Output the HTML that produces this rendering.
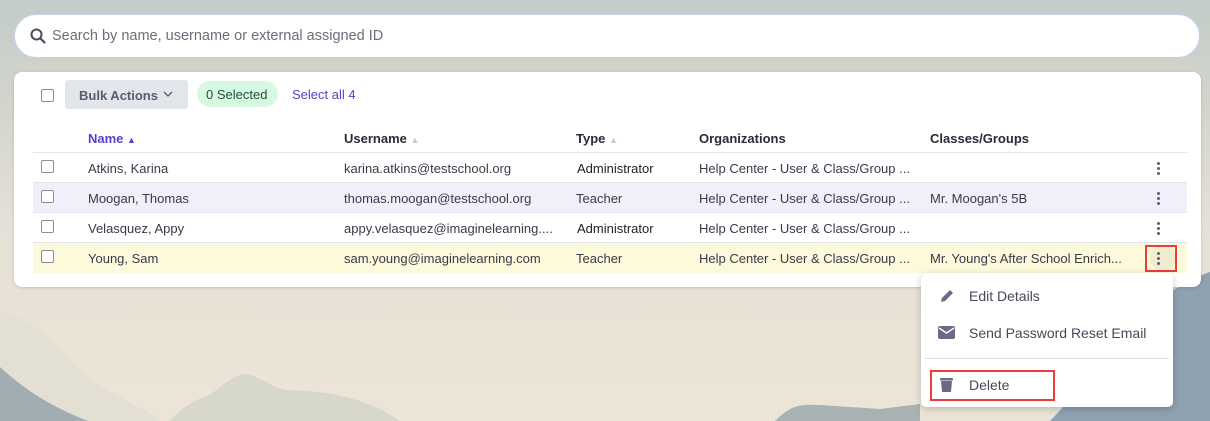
<!DOCTYPE html>
<html><head><style>
*{box-sizing:border-box;margin:0;padding:0}
body{width:1210px;height:421px;overflow:hidden;position:relative;font-family:"Liberation Sans",sans-serif;font-size:13px;color:#3a3a48;background:linear-gradient(180deg,#c3ccc8 0%,#d3d5cc 25%,#e6e1d6 55%,#ece5d7 100%)}
.abs{position:absolute}
.search{left:14px;top:14px;width:1186px;height:44px;background:#fff;border:1px solid #c9cdf0;border-radius:22px}
.search span{position:absolute;left:37px;top:13px;font-size:14.5px;color:#6e6c7a}
.card{left:14px;top:72px;width:1187px;height:215px;background:#fff;border-radius:8px;box-shadow:0 1px 3px rgba(0,0,0,.15)}
.cb{position:absolute;width:13px;height:13px;border:1.5px solid #8e8c9a;border-radius:2px;background:#fff}
.row{position:absolute;left:19px;width:1154px;height:30px;border-bottom:1px solid #e4e4ec}
.row div{position:absolute;top:8px;white-space:nowrap}
.dots{position:absolute;width:3px;height:13px}
.dots i{display:block;width:3px;height:3px;border-radius:50%;background:#5e5c72;margin-bottom:2px}
.menu{left:921px;top:273px;width:252px;height:134px;background:#fff;border-radius:5px;box-shadow:0 2px 8px rgba(0,0,0,.2)}
.menu .t{position:absolute;left:48px;font-size:14px;color:#4a4858}
.red{position:absolute;border:2px solid #ee3b3b}
</style></head><body>
<svg class="abs" style="left:0;top:0" width="1210" height="421">
<path d="M0 312 C40 320 60 350 80 370 C110 395 140 405 160 421 L0 421Z" fill="#e2ddd2" opacity=".8"/>
<path d="M0 367 C30 395 60 410 88 421 L0 421Z" fill="#a2adb2"/>
<path d="M170 421 C185 405 195 400 205 397 C220 390 230 375 245 374 C260 376 270 386 285 390 C320 391 360 394 400 421Z" fill="#d8d7cc"/>
<path d="M775 421 C790 407 795 404 820 405 L880 409 L920 404 L920 421Z" fill="#a8b2b3"/>
<path d="M1050 421 C1090 380 1120 330 1150 305 C1180 285 1200 275 1210 272 L1210 421Z" fill="#8fa2b0"/>
</svg>
<div class="abs search"><svg style="position:absolute;left:15px;top:13px" width="16" height="16" viewBox="0 0 16 16"><circle cx="6.5" cy="6.5" r="5" fill="none" stroke="#4d4b5e" stroke-width="2"/><path d="M10.5 10.5L14.5 14.5" stroke="#4d4b5e" stroke-width="2.2" stroke-linecap="round"/></svg><span>Search by name, username or external assigned ID</span></div>
<div class="abs card">
<div class="cb" style="left:27px;top:17px"></div>
<div style="position:absolute;left:51px;top:8px;width:123px;height:29px;background:#e2e5ea;border-radius:3px;font-weight:bold;color:#5d5b6c;padding:8px 0 0 14px">Bulk Actions<svg style="position:absolute;left:98px;top:11px" width="10" height="7" viewBox="0 0 10 7"><path d="M1 1l4 4 4-4" stroke="#5d5b6c" stroke-width="1.3" fill="none"/></svg></div>
<div style="position:absolute;left:183px;top:9px;width:81px;height:26px;background:#d7f9e2;border-radius:13px;color:#23503a;padding:6px 0 0 9px">0 Selected</div>
<div style="position:absolute;left:278px;top:15px;color:#5a3fd0">Select all 4</div>
<div class="row" style="top:51px;height:30px;font-weight:bold;color:#2b2a36">
<div style="left:55px;color:#5a3fd0">Name <span style="font-size:9px">&#9650;</span></div>
<div style="left:311px">Username <span style="font-size:9px;color:#ccc">&#9650;</span></div>
<div style="left:543px">Type <span style="font-size:9px;color:#ccc">&#9650;</span></div>
<div style="left:666px">Organizations</div>
<div style="left:897px">Classes/Groups</div>
</div>
<div class="row" style="top:81px"><span class="cb" style="left:8px;top:7px"></span><div style="left:55px">Atkins, Karina</div><div style="left:311px">karina.atkins@testschool.org</div><div style="left:544px;color:#222">Administrator</div><div style="left:666px">Help Center - User &amp; Class/Group ...</div><span class="dots" style="left:1124px;top:9px"><i></i><i></i><i></i></span></div>
<div class="row" style="top:111px;background:#f0effa"><span class="cb" style="left:8px;top:7px"></span><div style="left:55px">Moogan, Thomas</div><div style="left:311px">thomas.moogan@testschool.org</div><div style="left:543px">Teacher</div><div style="left:666px">Help Center - User &amp; Class/Group ...</div><div style="left:897px">Mr. Moogan's 5B</div><span class="dots" style="left:1124px;top:9px"><i></i><i></i><i></i></span></div>
<div class="row" style="top:141px"><span class="cb" style="left:8px;top:7px"></span><div style="left:55px">Velasquez, Appy</div><div style="left:311px">appy.velasquez@imaginelearning....</div><div style="left:544px;color:#222">Administrator</div><div style="left:666px">Help Center - User &amp; Class/Group ...</div><span class="dots" style="left:1124px;top:9px"><i></i><i></i><i></i></span></div>
<div class="row" style="top:171px;background:#fdf9db;border-bottom:none"><span class="cb" style="left:8px;top:7px"></span><div style="left:55px">Young, Sam</div><div style="left:311px">sam.young@imaginelearning.com</div><div style="left:543px">Teacher</div><div style="left:666px">Help Center - User &amp; Class/Group ...</div><div style="left:897px">Mr. Young's After School Enrich...</div><span style="position:absolute;left:1117px;top:2px;width:26px;height:26px;border-radius:50%;background:#efeccf"></span><span class="dots" style="left:1124px;top:9px"><i></i><i></i><i></i></span></div>
</div>
<div class="red" style="left:1145px;top:245px;width:32px;height:27px"></div>
<div class="abs menu">
<svg style="position:absolute;left:18px;top:15px" width="16" height="16" viewBox="0 0 16 16"><path d="M2 14l1-4L11 2l3 3-8 8z" fill="#6b6985"/></svg>
<div class="t" style="top:15px">Edit Details</div>
<svg style="position:absolute;left:17px;top:53px" width="17" height="13" viewBox="0 0 17 13"><rect width="17" height="13" rx="2" fill="#6b6985"/><path d="M1 2l7.5 5L16 2" stroke="#fff" stroke-width="1.4" fill="none"/></svg>
<div class="t" style="top:52px">Send Password Reset Email</div>
<div style="position:absolute;left:4px;right:4px;top:85px;height:1px;background:#dddde4"></div>
<svg style="position:absolute;left:19px;top:104px" width="13" height="15" viewBox="0 0 13 15"><rect x="0" y="1" width="13" height="2.5" rx="1" fill="#6b6985"/><path d="M1 4h11l-1 11H2z" fill="#6b6985"/></svg>
<div class="t" style="top:104px">Delete</div>
</div>
<div class="red" style="left:930px;top:370px;width:125px;height:31px"></div>
</body></html>
